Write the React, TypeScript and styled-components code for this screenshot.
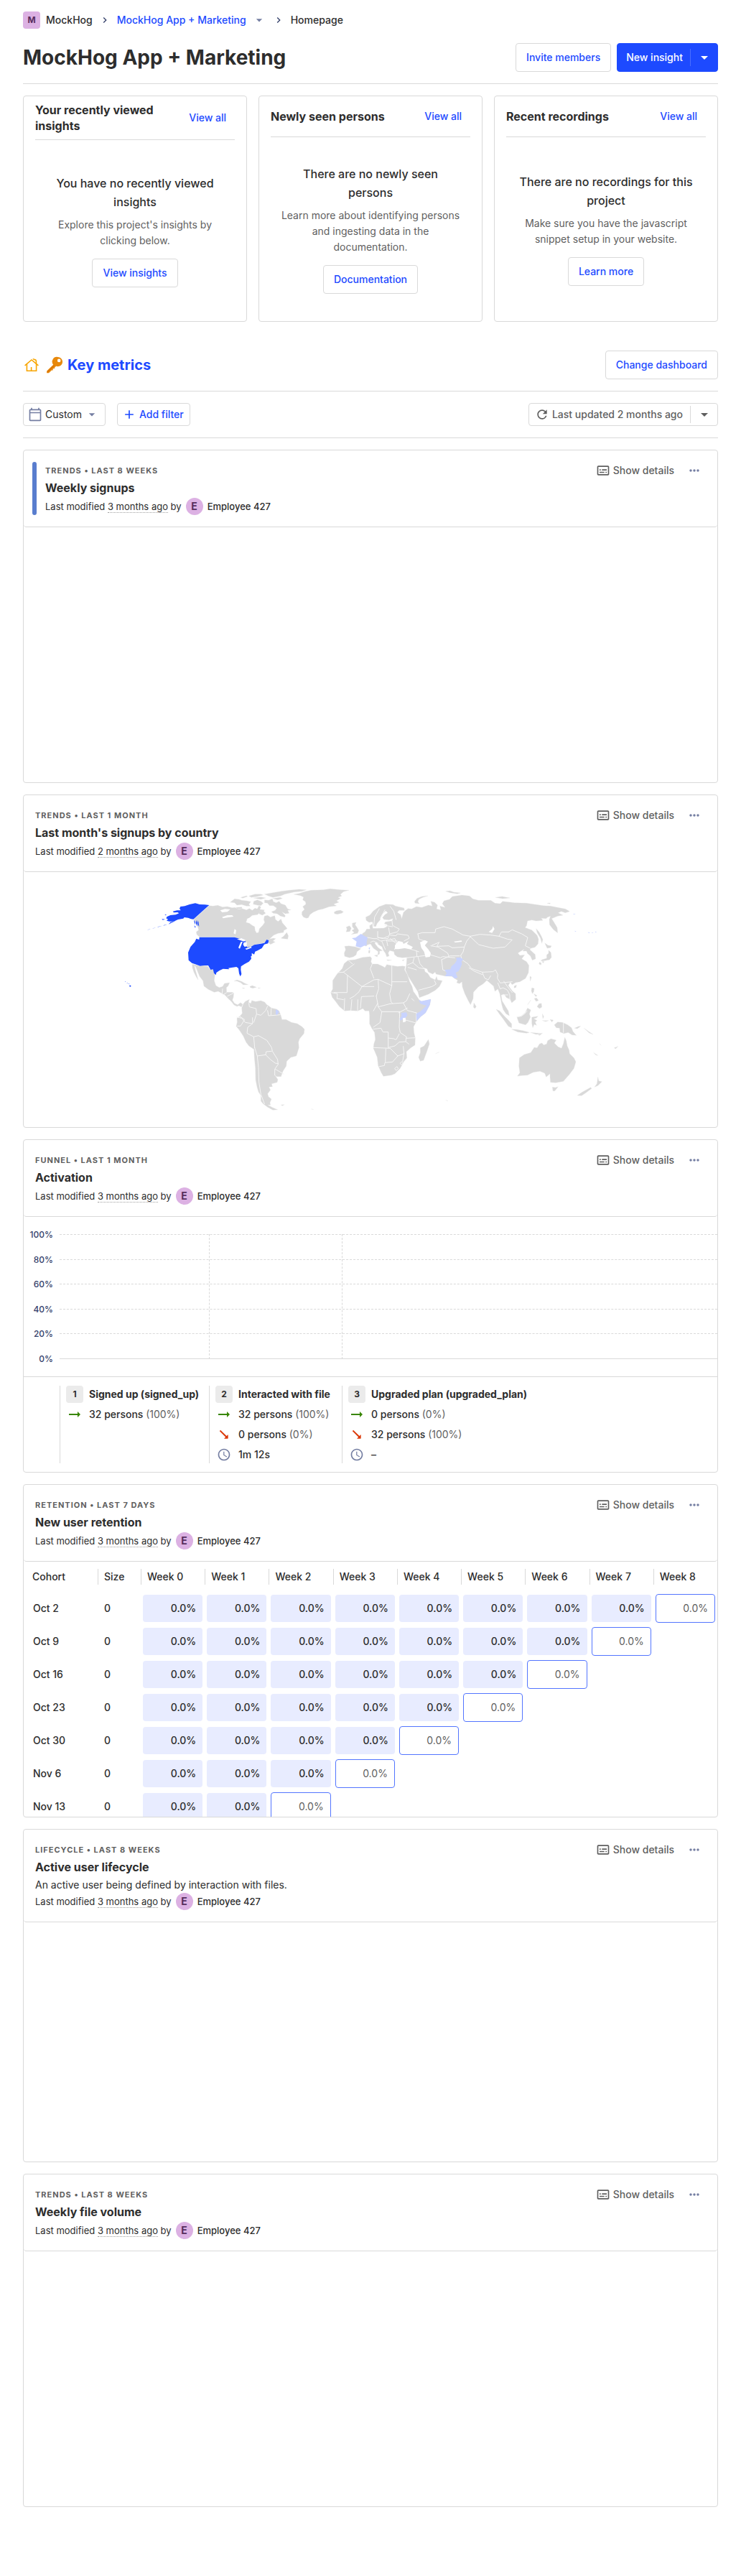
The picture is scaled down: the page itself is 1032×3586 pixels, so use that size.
import React from "react";
import styled, { createGlobalStyle, css } from "styled-components";
import {
  MdAdd,
  MdArrowDropDown,
  MdChevronRight,
  MdMoreHoriz,
  MdOutlineCalendarToday,
  MdOutlineSubtitles,
  MdRefresh,
  MdSchedule,
} from "react-icons/md";

const color = {
  text: "#2d2d2d",
  muted: "#5f5f5f",
  border: "#d9d9d9",
  primary: "#1d4aff",
  icon: "#747ea2",
  axis: "#35416b",
  lilac: "#dcb1e3",
  plum: "#572e5e",
};

const GlobalStyle = createGlobalStyle`
  *, *::before, *::after { box-sizing: border-box; }
  body {
    margin: 0;
    background: #fff;
    color: ${color.text};
    font-family: Inter, "Liberation Sans", sans-serif;
    font-size: 14px;
    line-height: 22px;
  }
  h1, h2, h3, h4, p { margin: 0; }
  a { color: ${color.primary}; text-decoration: none; }
  svg { flex-shrink: 0; }
`;

const Page = styled.main`
  padding: 16px 32px 96px;
`;

/* ---------- Breadcrumbs and page header ---------- */

const Breadcrumbs = styled.nav`
  display: flex;
  align-items: center;
  height: 24px;
  font-weight: 500;
  svg { color: ${color.axis}; }
`;

const CrumbGap = styled.span`
  display: flex;
  justify-content: center;
  width: 34px;
`;

const CrumbCaret = styled.button`
  display: flex;
  margin-left: 8px;
  padding: 0;
  border: 0;
  background: none;
  svg { color: ${color.icon}; }
`;

const Lettermark = styled.span<{ $round?: boolean }>`
  display: inline-flex;
  align-items: center;
  justify-content: center;
  flex-shrink: 0;
  width: 24px;
  height: 24px;
  border-radius: ${(p) => (p.$round ? "50%" : "4px")};
  background: ${color.lilac};
  color: ${color.plum};
  font-size: ${(p) => (p.$round ? "14px" : "12px")};
  font-weight: 700;
`;

const OrgName = styled.span`
  margin-left: 8px;
`;

const TitleBar = styled.header`
  display: flex;
  align-items: center;
  justify-content: space-between;
  gap: 16px;
  padding-bottom: 16px;
  border-bottom: 1px solid ${color.border};
`;

const PageTitleBar = styled(TitleBar)`
  margin: 20px 0 16px;
`;

const PageTitle = styled.h1`
  font-size: 28px;
  line-height: 36px;
  font-weight: 700;
`;

const ButtonRow = styled.div`
  display: flex;
  gap: 8px;
`;

const buttonBase = css`
  display: inline-flex;
  align-items: center;
  justify-content: center;
  border-radius: 4px;
  background: #fff;
  font: inherit;
  font-weight: 500;
  white-space: nowrap;
  cursor: pointer;
`;

const Button = styled.button`
  ${buttonBase}
  height: 40px;
  padding: 0 14px;
  border: 1px solid ${color.border};
  color: ${color.primary};
`;

const SmallButton = styled.button<{ $neutral?: boolean }>`
  ${buttonBase}
  gap: 4px;
  height: 32px;
  padding: 0 8px 0 6px;
  border: 1px solid ${color.border};
  color: ${(p) => (p.$neutral ? color.text : color.primary)};
  font-weight: ${(p) => (p.$neutral ? 400 : 500)};
  svg { color: ${(p) => (p.$neutral ? color.icon : color.primary)}; }
`;

const ButtonLink = styled.a`
  ${buttonBase}
  height: 40px;
  padding: 0 14px;
  border: 1px solid ${color.border};
`;

const PlainLink = styled.a`
  ${buttonBase}
  height: 40px;
  padding: 0 12px;
`;

const SplitButton = styled.div<{ $filled?: boolean }>`
  display: flex;
  align-items: center;
  height: ${(p) => (p.$filled ? "40px" : "32px")};
  border: 1px solid ${(p) => (p.$filled ? color.primary : color.border)};
  border-radius: 4px;
  background: ${(p) => (p.$filled ? color.primary : "#fff")};
  color: ${(p) => (p.$filled ? "#fff" : color.muted)};
`;

const SplitMain = styled.button`
  ${buttonBase}
  gap: 4px;
  height: 100%;
  padding: 0 10px 0 8px;
  border: 0;
  background: none;
  color: inherit;
`;

const FilledMain = styled(SplitMain)`
  padding: 0 10px 0 12px;
`;

const SplitMenu = styled.button<{ $filled?: boolean }>`
  ${buttonBase}
  height: 24px;
  width: 38px;
  padding: 0;
  border: 0;
  border-left: 1px solid ${(p) => (p.$filled ? "#4a6eff" : color.border)};
  border-radius: 0;
  background: none;
  color: inherit;
`;

/* ---------- Summary cards ---------- */

const SummaryGrid = styled.section`
  display: grid;
  grid-template-columns: repeat(3, minmax(0, 1fr));
  gap: 16px;
  margin-bottom: 40px;
`;

const SummaryCard = styled.article`
  display: flex;
  flex-direction: column;
  min-height: 315px;
  padding: 8px 16px 0;
  border: 1px solid ${color.border};
  border-radius: 4px;
`;

const SummaryHead = styled.header`
  display: flex;
  align-items: center;
  justify-content: space-between;
  padding-bottom: 8px;
  border-bottom: 1px solid ${color.border};
`;

const SummaryTitle = styled.h3`
  font-size: 16px;
  line-height: 22px;
  font-weight: 700;
`;

const EmptyState = styled.div`
  display: flex;
  flex: 1;
  flex-direction: column;
  align-items: center;
  justify-content: center;
  padding: 0 8px;
  text-align: center;
`;

const EmptyTitle = styled.h4`
  margin-bottom: 8px;
  padding: 0 8px;
  font-size: 16px;
  line-height: 26px;
  font-weight: 500;
`;

const EmptyText = styled.p`
  margin-bottom: 14px;
  color: ${color.muted};
`;

/* ---------- Dashboard bar ---------- */

const DashboardTitle = styled.h2`
  display: flex;
  align-items: center;
  gap: 10px;
  padding-left: 2px;
  font-size: 20px;
  line-height: 28px;
  font-weight: 700;
`;

const DashboardLink = styled.a`
  display: flex;
  align-items: center;
  gap: 6px;
`;

const FilterBar = styled.div`
  display: flex;
  align-items: center;
  justify-content: space-between;
  padding: 16px 0;
  margin-bottom: 16px;
  border-bottom: 1px solid ${color.border};
`;

const Filters = styled.div`
  display: flex;
  gap: 16px;
`;

/* ---------- Insight cards ---------- */

const InsightList = styled.section`
  display: grid;
  grid-auto-rows: 464px;
  gap: 16px;
`;

const Insight = styled.article`
  display: flex;
  flex-direction: column;
  overflow: hidden;
  border: 1px solid ${color.border};
  border-radius: 4px;
`;

const InsightHead = styled.header<{ $ribbon?: boolean }>`
  display: flex;
  gap: 12px;
  padding: 16px 16px 16px ${(p) => (p.$ribbon ? "12px" : "16px")};
  border-bottom: 1px solid ${color.border};
  border-radius: 0 0 4px 4px;
`;

const Ribbon = styled.span`
  width: 6px;
  border-radius: 3px;
  background: #597dce;
`;

const InsightInfo = styled.div`
  flex: 1;
  min-width: 0;
`;

const InsightTop = styled.div`
  display: flex;
  align-items: center;
  justify-content: space-between;
  height: 24px;
`;

const Kind = styled.span`
  color: ${color.muted};
  font-size: 11px;
  font-weight: 700;
  letter-spacing: 1px;
  text-transform: uppercase;
`;

const InsightActions = styled.div`
  display: flex;
  gap: 4px;
`;

const GhostButton = styled.button<{ $icon?: boolean }>`
  ${buttonBase}
  gap: 4px;
  height: 32px;
  min-width: 32px;
  padding: 0 ${(p) => (p.$icon ? "0" : "8px")};
  border: 0;
  color: ${(p) => (p.$icon ? color.icon : color.muted)};
`;

const InsightTitle = styled.h3`
  margin-bottom: 2px;
  font-size: 16px;
  line-height: 24px;
  font-weight: 700;
`;

const Meta = styled.div`
  display: flex;
  align-items: center;
  gap: 6px;
  height: 24px;
  font-size: 13px;
  line-height: 16px;
`;

const Ago = styled.time`
  border-bottom: 1px dotted #a0a0a0;
`;

const Author = styled.span`
  font-weight: 500;
`;

const InsightBody = styled.div`
  flex: 1;
  min-height: 0;
`;

/* ---------- Map ---------- */

const MapSvg = styled.svg`
  display: block;
  width: 100%;
  height: 100%;
`;

/* ---------- Funnel ---------- */

const Funnel = styled(InsightBody)`
  display: grid;
  grid-template-columns: 50px 208px 185px 1fr;
  grid-template-rows: 1fr auto;
`;

const Axis = styled.div`
  display: flex;
  grid-area: 1 / 1;
  flex-direction: column;
  justify-content: space-between;
  padding: 18px 9px 18px 0;
  color: ${color.axis};
  font-size: 12px;
  line-height: 13px;
  font-weight: 500;
  text-align: right;
`;

const GridLines = styled.div`
  display: flex;
  grid-area: 1 / 2 / 2 / -1;
  flex-direction: column;
  justify-content: space-between;
  padding: 24px 0;
`;

const GridLine = styled.span<{ $solid?: boolean }>`
  border-top: 1px ${(p) => (p.$solid ? "solid" : "dashed")} ${color.border};
`;

const StepDivider = styled.div<{ $column: number }>`
  grid-area: 1 / ${(p) => p.$column};
  margin: 24px 0;
  border-left: 1px dashed ${color.border};
`;

const StepCell = styled.div`
  padding: 12px 0;
  border-top: 1px solid ${color.border};
`;

const Step = styled.div`
  display: grid;
  grid-auto-rows: 24px;
  gap: 4px;
  height: 108px;
  padding: 0 8px;
  border-left: 1px solid ${color.border};
  white-space: nowrap;
`;

const StepRow = styled.div<{ $tone?: string }>`
  display: flex;
  align-items: center;
  gap: 8px;
  font-weight: 500;
  small {
    color: ${color.muted};
    font-size: 14px;
    font-weight: 400;
  }
  svg { color: ${(p) => p.$tone}; }
`;

const StepName = styled.strong`
  font-weight: 700;
`;

const StepIcon = styled.span<{ $turn?: boolean }>`
  display: flex;
  justify-content: center;
  width: 24px;
  svg { transform: ${(p) => (p.$turn ? "rotate(45deg)" : "none")}; }
`;

const Glyph = styled.span`
  width: 24px;
  height: 24px;
  border-radius: 4px;
  background: #ebebeb;
  font-size: 12px;
  line-height: 24px;
  font-weight: 700;
  text-align: center;
`;

/* ---------- Retention ---------- */

const RetentionTable = styled.table`
  width: 100%;
  table-layout: fixed;
  border-collapse: collapse;
`;

const HeadCell = styled.th<{ $width?: string }>`
  width: ${(p) => p.$width};
  height: 42px;
  padding: 0;
  font-weight: 500;
  text-align: left;
  span {
    display: block;
    padding-left: 8px;
    border-left: 1px solid ${color.border};
  }
  &:first-child span {
    padding-left: 12px;
    border-left: 0;
  }
`;

const LabelCell = styled.td<{ $first?: boolean }>`
  height: 46px;
  padding: 0 0 0 ${(p) => (p.$first ? "13px" : "9px")};
  font-weight: 500;
`;

const ValueCell = styled.td`
  padding: 0 3px;
`;

const Value = styled.div<{ $open?: boolean }>`
  height: ${(p) => (p.$open ? "40px" : "38px")};
  padding-right: 9px;
  border: ${(p) => (p.$open ? "1px solid #5375ff" : "0")};
  border-radius: 4px;
  background: ${(p) => (p.$open ? "#fff" : "#e8ecff")};
  color: ${(p) => (p.$open ? color.muted : color.text)};
  font-weight: ${(p) => (p.$open ? 400 : 500)};
  line-height: 38px;
  text-align: right;
`;

/* ---------- Data ---------- */

const summaries = [
  {
    title: "Your recently viewed insights",
    heading: "You have no recently viewed insights",
    text: "Explore this project's insights by clicking below.",
    action: "View insights",
  },
  {
    title: "Newly seen persons",
    heading: "There are no newly seen persons",
    text: "Learn more about identifying persons and ingesting data in the documentation.",
    action: "Documentation",
  },
  {
    title: "Recent recordings",
    heading: "There are no recordings for this project",
    text: "Make sure you have the javascript snippet setup in your website.",
    action: "Learn more",
  },
];

const cohorts = ["Oct 2", "Oct 9", "Oct 16", "Oct 23", "Oct 30", "Nov 6", "Nov 13"];
const weeks = [0, 1, 2, 3, 4, 5, 6, 7, 8];

const americas = [
  // Canada
  "M424,152L440,154 460,151 480,158 500,156 520,161 532,160 545,167 562,165 580,170 592,164 604,172 615,163 625,166 632,152 640,158 636,168 655,170 648,180 636,180 626,190 604,193 592,203 582,210 578,222 592,226 604,235 614,240 616,256 622,266 630,264 634,248 648,234 656,222 652,210 655,196 668,193 680,200 692,196 698,194 701,210 712,218 724,208 730,224 742,238 750,248 736,256 735,264 712,268 694,275 684,284 676,292 692,288 702,290 690,300 700,304 680,314 672,306 673,296 664,294 655,308 640,310 612,316 600,322 590,330 578,326 582,308 570,296 548,290 530,283 383,283 372,272 370,262 380,254 376,240 368,226 360,209Z",
  "M735,280L748,264 755,278 752,292 735,290 724,288Z",
  "M536,160L560,158 562,164 540,166Z",
  "M512,138L530,124 548,126 560,130 580,132 598,136 590,146 595,154 580,154 560,148 540,150 530,140Z",
  "M610,134L625,128 640,134 650,142 640,152 625,150 608,146Z M655,128L672,130 688,124 692,136 704,140 716,134 724,144 742,150 752,166 766,170 752,172 758,184 742,186 728,178 742,194 740,200 722,196 708,186 692,184 684,178 700,172 706,162 692,152 676,152 668,142 655,140Z",
  "M634,176L650,174 660,184 646,192 632,186Z",
  "M590,112L615,104 640,104 650,108 625,114 600,118Z M556,118L580,111 584,114 564,121Z M655,104L690,98 725,92 760,88 800,84 830,86 812,92 780,95 740,104 722,112 690,118 672,112Z M610,120L640,116 660,120 640,126Z M690,122L720,118 730,122 710,128Z",
  // Greenland
  "M778,105L800,101 822,94 850,88 900,86 930,82 975,86 1008,88 985,94 972,106 978,112 962,118 972,122 956,132 966,138 944,146 956,153 925,157 900,166 880,170 858,180 845,190 838,203 830,205 818,200 811,190 812,178 822,168 815,156 828,146 826,136 815,128 818,116 805,110Z",
  "M946,179L955,174 972,171 985,178 978,184 960,188 948,186Z",
  // Mexico and Central America
  "M353,397L366,399 386,405 400,402 418,405 426,418 440,418 448,440 445,465 452,486 466,494 480,490 488,477 509,474 503,488 496,494 497,514 520,514 527,517 525,535 521,547 530,560 543,566 555,557 564,564 559,575 548,570 540,573 528,567 516,552 503,540 490,526 474,517 462,510 445,514 420,502 402,488 398,466 384,448 376,428 368,408 362,402 366,420 372,440 378,462 370,450 360,430 354,412Z",
  "M528,467L540,462 560,469 572,476 587,482 566,483 556,474 540,467Z M594,490L604,486 622,493 606,497 596,494Z M562,495L573,497 566,499Z M628,495L638,496 630,498Z",
  // South America
  "M560,580L567,562 575,552 592,544 588,556 598,560 602,548 618,553 640,549 656,555 665,566 672,570 684,580 705,584 716,592 724,612 728,628 745,628 768,640 792,645 812,658 822,668 820,686 802,708 797,722 799,745 793,765 788,780 765,786 748,802 746,822 733,842 724,866 706,866 697,858 711,878 708,890 685,896 688,908 674,910 680,922 668,938 672,950 684,960 678,975 680,985 668,984 690,996 710,1004 690,1006 668,994 650,980 640,968 640,945 630,930 624,910 618,880 617,830 613,790 611,752 590,738 578,722 566,696 550,672 537,656 541,638 540,622 552,614 562,602Z",
  "M724,984L738,983 730,988Z M850,1001L860,1004Z",
  // British Isles
  "M1022,225L1038,222 1034,232 1042,244 1049,256 1044,268 1018,272 1030,264 1020,256 1030,250 1022,240Z M996,262L1000,250 996,242 1010,236 1018,246 1012,260Z",
  // Iberia
  "M990,322L1008,320 1034,324 1058,332 1042,344 1038,358 1026,366 1010,370 990,364 988,350 994,336Z",
];

const africa =
  "M1005,380L1032,378 1065,368 1097,365 1103,372 1100,386 1105,396 1128,396 1150,406 1158,411 1166,398 1184,402 1210,406 1232,404 1243,406 1240,420 1252,440 1262,470 1272,490 1277,510 1290,528 1302,546 1312,552 1350,543 1346,566 1328,600 1305,618 1288,640 1278,658 1280,684 1285,704 1284,734 1266,746 1248,762 1250,788 1237,804 1222,832 1200,854 1185,860 1152,865 1143,850 1130,820 1126,785 1110,748 1112,730 1118,712 1115,682 1103,664 1094,646 1094,610 1092,592 1075,592 1066,582 1045,592 1012,590 990,592 968,574 952,552 938,535 932,515 940,500 940,465 958,438 980,415 988,394Z";

const eurasia = [
  // Europe, Russia and Asia as one landmass
  "M15,268L25,262 32,250 46,250 44,236 55,228 58,247 80,247 104,246 116,240 118,232 106,228 110,220 138,216 142,206 125,212 104,210 98,202 108,190 120,182 112,174 98,186 90,200 88,212 76,226 70,240 60,238 56,220 42,222 30,214 28,200 45,192 60,174 85,156 112,146 142,148 152,154 188,162 190,172 168,172 160,180 174,190 178,206 186,180 195,172 205,164 220,166 240,156 262,160 290,150 306,154 300,134 316,138 328,150 324,166 342,170 338,154 360,160 348,144 355,132 378,126 390,114 430,108 462,112 475,124 498,130 550,130 568,142 590,144 600,134 650,140 700,142 740,148 770,152 800,154 830,160 862,166 880,176 862,182 845,176 832,182 852,192 830,196 805,206 815,222 828,244 830,266 812,252 796,232 795,210 800,196 788,200 782,206 762,205 768,214 740,216 722,212 704,216 700,236 694,244 722,254 744,276 750,292 748,312 735,326 718,330 714,336 736,356 738,374 724,380 716,362 704,352 700,342 684,342 690,334 664,350 672,360 692,358 680,374 700,386 710,402 708,432 696,456 672,470 655,473 640,482 632,472 624,486 640,508 654,520 655,544 638,558 632,544 616,536 606,522 594,526 598,550 614,576 624,592 628,612 614,604 602,586 596,564 588,520 580,500 568,510 562,488 548,476 534,464 520,478 498,492 478,514 477,540 466,566 456,548 442,520 432,492 430,470 420,478 408,474 412,464 400,457 388,448 358,446 322,438 318,430 308,438 290,430 284,416 272,412 276,428 288,436 298,452 318,462 324,448 328,462 348,466 336,490 318,506 290,522 252,536 246,512 226,480 206,448 194,420 198,400 200,368 180,370 160,366 148,356 146,344 128,340 122,350 126,362 116,366 110,350 102,340 96,324 80,314 72,304 66,310 80,328 98,340 86,342 86,354 78,358 80,344 60,330 48,312 35,316 30,322 10,310 10,280Z",
  "M64,360L78,358 76,366Z M40,340L46,338 45,350 40,350Z M116,378L136,380 120,382Z M180,380L190,377 184,383Z",
  // Novaya Zemlya and Arctic islands
  "M234,142L232,134 242,122 262,114 288,111 266,118 250,126 246,136 252,144Z M362,92L380,90 396,96 424,99 410,103 380,98Z M570,118L598,114 630,120 600,123Z M786,142L800,141 796,145Z",
  // Sakhalin, Japan, Taiwan, Hainan
  "M740,248L752,262 762,280 768,294 764,310 758,288 744,264Z M776,308L790,318 804,320 800,328 786,330Z M792,338L802,348 804,368 796,378 778,382 760,384 764,378 784,372 784,358 792,352Z M754,388L762,392 760,400 752,396Z M766,384L774,386 768,392Z M714,448L720,450 716,468Z M648,488L658,484 656,494 648,496Z",
  "M480,558L490,574 484,582 478,576Z",
  // Madagascar
  "M290,711L294,730 284,760 270,798 256,802 249,786 256,766 256,746 272,738Z",
  // Philippines
  "M722,495L732,498 730,512 724,520 720,508Z M732,540L742,538 750,548 740,552Z M752,562L762,560 764,576 754,582 744,574Z M730,520L744,528 738,532Z M704,566L718,546 708,562Z",
  // Indonesia and Papua
  "M573,585L588,592 606,612 626,632 638,646 638,662 624,656 604,628 586,604Z M638,668L660,670 684,674 712,682 700,685 664,680Z M660,618L676,614 694,600 704,580 718,588 712,604 716,618 706,640 696,650 668,642Z M722,618L748,614 740,622 730,624 744,632 736,638 742,652 732,648 726,662 722,644Z M716,682L740,684 766,686 740,690Z M748,692L766,684 756,694Z M766,604L772,616 768,624Z M766,632L792,632 780,636Z M798,628L812,630 806,638Z M816,650L830,638 850,640 872,650 888,662 894,678 908,694 890,692 874,682 856,686 840,680 838,664 824,662Z M900,664L918,656 926,656 912,666Z",
  "M940,664L960,678 978,690 962,684Z M980,766L998,778 990,776Z M1066,746L1082,740 1072,750Z M1004,728L1012,736Z M362,964L372,968Z M320,770L336,764Z",
  // Australia and New Zealand
  "M662,864L672,850 668,822 670,788 690,774 718,766 732,744 744,746 754,730 764,726 772,734 784,730 788,716 802,708 824,714 816,726 832,742 846,748 854,728 860,702 866,716 870,738 878,756 880,770 898,788 906,804 898,832 880,856 854,886 822,892 800,890 798,868 798,854 782,868 776,852 756,844 728,848 704,860 680,862Z",
  "M808,910L820,912 832,908 818,926 810,926Z M998,868L1002,884 1015,887 998,904 984,910 994,896Z M968,911L972,916 948,934 930,946 912,945 930,932Z",
];

const borders = [
  "M1105,396L1097,416 1112,455M1187,402L1187,470 1250,470M1187,470L1187,486 1130,460 1112,462 1062,490 985,430M985,430L1030,396M985,430L960,432M1002,444L1000,515 945,515M1062,490L1050,512 1030,530 1012,540M1130,460L1132,500 1122,530M1062,490L1112,490M1187,486L1178,520 1184,555 1190,560M1112,530L1060,532 1056,580M1045,545L1044,590M1020,545L1016,590M990,540L988,588M958,540L985,545M935,515L960,520 958,540M1122,530L1128,560 1110,592M1128,560L1130,575 1180,562M1180,562L1235,558 1248,550 1262,520M1235,558L1252,590 1290,600M1130,575L1145,595 1220,595M1145,595L1138,640 1110,660M1110,668L1142,664 1150,680 1172,680 1172,745M1110,745L1180,748M1172,705L1195,708 1205,712 1218,688M1220,595L1218,660 1222,682 1248,700M1248,700L1245,720 1258,730M1248,706L1285,704M1290,632L1288,642 1245,630M1290,632L1290,600M1172,745L1200,738 1218,722 1245,720M1235,740L1238,770 1212,780 1180,748M1212,780L1190,805 1158,808 1156,820 1135,824M1162,750L1160,805M1238,770L1232,804M1200,832L1208,824 1214,832 1206,840ZM1222,810l6,-6 6,6 -6,6ZM1215,600L1252,580M1270,540L1280,550M1005,380L1022,395",
  "M1170,300L1210,300M1128,260L1128,285 1150,290 1170,280M1174,245L1178,270 1210,262 1218,250 1190,235 1188,216M1178,270L1170,290 1128,285M1178,275L1205,278 1210,270 1255,276 1260,288 1238,300M1085,285L1110,290 1125,290 1140,300 1165,296 1170,320M1098,305L1110,300 1130,310M1165,296L1200,290 1210,312 1198,335M1145,300L1160,335M1180,290L1205,310M1158,170L1140,205M1135,165L1115,200 1112,235M1180,155L1195,175 1205,210M1158,235L1190,240",
  "M1250,330L1280,338 1300,345M1290,340L1292,365 1250,370M1292,365L1330,360 1350,358 1390,370 1400,365 1450,370M1296,365L1305,395 1322,415M1280,370L1275,390 1252,400M1275,390L1300,412 1322,416M1255,410L1290,420M1300,505L1355,490 1372,480 1365,465M1395,378L1400,420 1412,425M1395,378L1430,362 1470,362M1350,320L1380,325 1420,350 1425,362M1355,318L1385,305 1375,322 1425,320 1440,328 1490,325 1500,300 1515,282M1296,270L1315,265 1368,265 1370,250 1405,240 1440,250 1485,275 1515,280M1296,270L1300,292 1325,300M1515,280L1555,272 1600,275 1635,280 1645,262 1675,262M1515,282L1550,315 1610,330 1660,325 1690,295 1670,292 1635,280M1675,262L1690,253 1730,270 1755,285 1745,320 1765,330M1490,325L1485,345 1475,360 1480,378 1505,395 1520,415 1565,430 1610,428 1620,420 1630,440 1628,455 1640,475 1690,470M1510,412L1530,425 1565,440M1565,430L1575,455 1590,462 1600,445M1630,475L1640,500 1652,495 1670,505 1680,525 1680,548M1655,468L1670,490 1690,515M1650,525L1672,525M1710,616L1728,614 1742,604 1752,592M1904,640L1904,682",
  "M590,560L592,575 620,582 622,605 610,640M540,618L560,622 575,640 605,645 605,620M552,615L572,628 555,655 542,655M605,645L585,660 582,685 610,700 630,695 665,715 685,745 688,760 710,795 712,815M610,700L614,745M614,745L625,780 660,775 662,762 685,760M660,775L680,795 700,810 712,812M625,780L630,830 632,890 640,940 655,980M700,835L735,855M712,815L698,835 698,860M622,605L640,610 660,590 668,572M668,590L672,612 720,608M683,582L682,608M480,500L478,520M496,516L482,525M525,518L500,530",
];

const waters = [
  "M470,172L490,166 512,168 500,178 478,180ZM478,200L500,192 520,192 526,198 500,202 482,205ZM530,250L537,255 534,272 526,268ZM580,208L600,200 612,204 596,214Z",
  "M540,292L560,288 576,296 570,302 556,298ZM556,304L564,302 552,332 546,328ZM568,306L580,304 582,322 572,324 566,316ZM574,332L598,324 602,328 580,336Z",
  "M1200,318L1214,300 1232,304 1236,312 1258,300 1250,312 1275,325 1268,334 1240,330 1215,334 1200,334ZM1305,305L1325,296 1338,302 1325,318 1340,335 1350,350 1346,366 1328,368 1322,345 1310,328ZM1446,302L1478,298 1480,303 1452,306ZM1592,262L1606,250 1610,238 1616,250 1606,266ZM1233,622L1244,620 1246,636 1234,640Z",
];

function WorldMap() {
  return (
    <MapSvg viewBox="-351 12 2898 1065" role="img" aria-label="World map of signups by country">
      <g fill="#d9d9d9" stroke="#e6e6e6" strokeWidth="1">
        {americas.map((d) => <path key={d} d={d} />)}
        <path d={africa} />
        <g transform="translate(1050)">{eurasia.map((d) => <path key={d} d={d} />)}</g>
      </g>
      <g fill="none" stroke="#f6f6f6" strokeWidth="3" strokeLinejoin="round" strokeLinecap="round">
        {borders.map((d) => <path key={d} d={d} />)}
      </g>
      <g fill="#1d4aff">
        <path d="M424,150L358,209 348,208 336,203 320,201 316,206 294,210 276,218 258,218 246,215 252,209 244,205 248,198 262,192 284,190 298,184 292,180 276,181 272,176 290,172 305,172 300,164 304,156 322,154 342,147 366,142 384,147 406,148Z" />
        <path d="M283,216L264,225 254,230 262,221ZM250,230L232,236 236,233ZM228,236L206,243 212,240ZM202,243L186,249 192,246ZM180,250L164,254 172,251ZM238,190L246,189 242,193ZM226,208L240,209 230,212Z" />
        <path d="M362,212l4,10 -1,10 -4,-14ZM370,212l5,12 -2,14 -4,-12ZM376,212l4,10 2,18 -5,-8ZM362,234l6,8 -4,2Z" />
        <path d="M383,284L530,284 552,290 564,290 578,304 582,326 598,324 612,316 640,311 655,308 664,294 673,297 670,310 654,314 644,330 626,340 616,344 612,356 602,350 602,362 598,364 600,374 590,386 572,396 557,406 556,420 559,438 554,448 549,436 546,414 538,408 518,411 504,413 508,418 482,416 466,424 454,432 452,442 444,434 440,418 430,420 420,402 402,402 386,404 366,397 352,392 338,380 336,348 346,324 364,304 370,290 382,294Z" />
        <path d="M91,484l6,2 0,4 -5,2ZM80,474l4,2 -3,1ZM72,468l3,1 -2,2ZM87,477l4,1 -3,2Z" />
      </g>
      <g fill="#c8d3ff">
        <path d="M1020,288L1036,286 1046,278 1058,270 1072,278 1086,286 1082,302 1082,318 1070,320 1056,328 1036,322 1040,302ZM1091,328L1096,326 1095,335 1091,334ZM702,586L712,590 716,597 708,608 702,606Z" />
        <g transform="translate(1050)">
          <path d="M358,420L382,418 386,406 400,394 408,382 406,370 424,368 436,378 428,384 430,396 424,412 416,426 404,432 412,452 400,457 388,446 360,447 366,434Z" />
          <path d="M250,546L260,551 300,543 296,566 278,600 258,616 241,634 239,604 256,594 282,570 256,562ZM176,600L198,598 202,610 194,622 172,632 170,624 178,612Z" />
          <path d="M894,186L906,187 898,189ZM952,229L960,230ZM900,257L908,259 904,261ZM956,263L966,264 960,267ZM972,264L980,265 974,267ZM986,260L994,262 988,264Z" />
        </g>
      </g>
      <g fill="#fff">{waters.map((d) => <path key={d} d={d} />)}</g>
    </MapSvg>
  );
}

/* ---------- Icons ---------- */

function HomeIcon() {
  return (
    <svg width="20" height="20" viewBox="0 0 20 20" fill="none" stroke="#f7a501" strokeWidth="1.6" aria-hidden="true">
      <path d="M.6 10.8 10 3l9.4 7.8" />
      <path d="M3.4 9v9.2h13.2V9" />
      <path d="M9.6 18v-5" />
      <path d="M16.4 8.4V4.2M12.2 1.2c.4 1.4 1.6 1.2 2.4 1.4s1.8.4 1.8 1.8" />
    </svg>
  );
}

function KeyIcon() {
  return (
    <svg width="24" height="24" viewBox="0 0 24 24" aria-hidden="true">
      <path
        fill="#e8890c"
        fillRule="evenodd"
        d="M16.5 1a6.6 6.6 0 0 1 6.6 6.6 6.6 6.6 0 0 1-9 6.1l-1.9 1.8.1 1.6-1.8-.1-.9.9.2 1.7-1.9-.1-3.9 3.7-3 .1.3-3 8.9-8.6A6.6 6.6 0 0 1 16.5 1Zm1.7 2.6a2.3 2.3 0 1 0 0 4.6 2.3 2.3 0 0 0 0-4.6Z"
      />
      <path stroke="#c7600a" strokeWidth="1" d="m2 22 9.6-9.4" />
    </svg>
  );
}

function ArrowIcon() {
  return (
    <svg width="16" height="8" viewBox="0 0 16 8" fill="currentColor" aria-hidden="true">
      <path d="M0 3h12V0l4 4-4 4V5H0z" />
    </svg>
  );
}

/* ---------- Views ---------- */

interface InsightCardProps {
  kind: string;
  title: string;
  ago?: string;
  description?: string;
  ribbon?: boolean;
  children?: React.ReactNode;
}

function InsightCard({ kind, title, ago = "3 months ago", description, ribbon, children }: InsightCardProps) {
  return (
    <Insight>
      <InsightHead $ribbon={ribbon}>
        {ribbon && <Ribbon />}
        <InsightInfo>
          <InsightTop>
            <Kind>{kind}</Kind>
            <InsightActions>
              <GhostButton type="button">
                <MdOutlineSubtitles size={20} />
                Show details
              </GhostButton>
              <GhostButton type="button" $icon aria-label="More">
                <MdMoreHoriz size={20} />
              </GhostButton>
            </InsightActions>
          </InsightTop>
          <InsightTitle>{title}</InsightTitle>
          {description && <p>{description}</p>}
          <Meta>
            <span>Last modified <Ago>{ago}</Ago> by</span>
            <Lettermark $round>E</Lettermark>
            <Author>Employee 427</Author>
          </Meta>
        </InsightInfo>
      </InsightHead>
      {children}
    </Insight>
  );
}

function Converted({ children }: { children: React.ReactNode }) {
  return (
    <StepRow $tone="#388600">
      <StepIcon><ArrowIcon /></StepIcon>
      <span>{children}</span>
    </StepRow>
  );
}

function Dropped({ children }: { children: React.ReactNode }) {
  return (
    <StepRow $tone="#db3707">
      <StepIcon $turn><ArrowIcon /></StepIcon>
      <span>{children}</span>
    </StepRow>
  );
}

function Elapsed({ children }: { children: React.ReactNode }) {
  return (
    <StepRow $tone={color.icon}>
      <StepIcon><MdSchedule size={20} /></StepIcon>
      <span>{children}</span>
    </StepRow>
  );
}

function FunnelChart() {
  return (
    <Funnel>
      <Axis>
        {["100%", "80%", "60%", "40%", "20%", "0%"].map((tick) => <span key={tick}>{tick}</span>)}
      </Axis>
      <GridLines>
        {[100, 80, 60, 40, 20, 0].map((tick) => <GridLine key={tick} $solid={tick === 0} />)}
      </GridLines>
      <StepDivider $column={3} />
      <StepDivider $column={4} />
      <StepCell />
      <StepCell>
        <Step>
          <StepRow><Glyph>1</Glyph><StepName>Signed up (signed_up)</StepName></StepRow>
          <Converted>32 persons <small>(100%)</small></Converted>
        </Step>
      </StepCell>
      <StepCell>
        <Step>
          <StepRow><Glyph>2</Glyph><StepName>Interacted with file</StepName></StepRow>
          <Converted>32 persons <small>(100%)</small></Converted>
          <Dropped>0 persons <small>(0%)</small></Dropped>
          <Elapsed>1m 12s</Elapsed>
        </Step>
      </StepCell>
      <StepCell>
        <Step>
          <StepRow><Glyph>3</Glyph><StepName>Upgraded plan (upgraded_plan)</StepName></StepRow>
          <Converted>0 persons <small>(0%)</small></Converted>
          <Dropped>32 persons <small>(100%)</small></Dropped>
          <Elapsed>–</Elapsed>
        </Step>
      </StepCell>
    </Funnel>
  );
}

function Retention() {
  return (
    <InsightBody>
      <RetentionTable>
        <thead>
          <tr>
            <HeadCell $width="103px"><span>Cohort</span></HeadCell>
            <HeadCell $width="60px"><span>Size</span></HeadCell>
            {weeks.map((week) => <HeadCell key={week}><span>Week {week}</span></HeadCell>)}
          </tr>
        </thead>
        <tbody>
          {cohorts.map((cohort, row) => (
            <tr key={cohort}>
              <LabelCell $first>{cohort}</LabelCell>
              <LabelCell>0</LabelCell>
              {weeks.map((week) => (
                <ValueCell key={week}>
                  {week <= 8 - row && <Value $open={week === 8 - row}>0.0%</Value>}
                </ValueCell>
              ))}
            </tr>
          ))}
        </tbody>
      </RetentionTable>
    </InsightBody>
  );
}

export default function App() {
  return (
    <>
      <GlobalStyle />
      <Page>
        <Breadcrumbs aria-label="Breadcrumb">
          <Lettermark>M</Lettermark>
          <OrgName>MockHog</OrgName>
          <CrumbGap><MdChevronRight size={16} /></CrumbGap>
          <a href="#project">MockHog App + Marketing</a>
          <CrumbCaret type="button" aria-label="Switch project"><MdArrowDropDown size={20} /></CrumbCaret>
          <CrumbGap><MdChevronRight size={16} /></CrumbGap>
          <span>Homepage</span>
        </Breadcrumbs>

        <PageTitleBar>
          <PageTitle>MockHog App + Marketing</PageTitle>
          <ButtonRow>
            <Button type="button">Invite members</Button>
            <SplitButton $filled>
              <FilledMain type="button">New insight</FilledMain>
              <SplitMenu type="button" $filled aria-label="More insight types">
                <MdArrowDropDown size={24} />
              </SplitMenu>
            </SplitButton>
          </ButtonRow>
        </PageTitleBar>

        <SummaryGrid>
          {summaries.map((item) => (
            <SummaryCard key={item.title}>
              <SummaryHead>
                <SummaryTitle>{item.title}</SummaryTitle>
                <PlainLink href="#all">View all</PlainLink>
              </SummaryHead>
              <EmptyState>
                <EmptyTitle>{item.heading}</EmptyTitle>
                <EmptyText>{item.text}</EmptyText>
                <ButtonLink href="#open">{item.action}</ButtonLink>
              </EmptyState>
            </SummaryCard>
          ))}
        </SummaryGrid>

        <TitleBar>
          <DashboardTitle>
            <HomeIcon />
            <DashboardLink href="#dashboard"><KeyIcon />Key metrics</DashboardLink>
          </DashboardTitle>
          <Button type="button">Change dashboard</Button>
        </TitleBar>

        <FilterBar>
          <Filters>
            <SmallButton type="button" $neutral>
              <MdOutlineCalendarToday size={20} />
              Custom
              <MdArrowDropDown size={20} />
            </SmallButton>
            <SmallButton type="button">
              <MdAdd size={20} />
              Add filter
            </SmallButton>
          </Filters>
          <SplitButton>
            <SplitMain type="button">
              <MdRefresh size={20} />
              Last updated 2 months ago
            </SplitMain>
            <SplitMenu type="button" aria-label="Refresh options">
              <MdArrowDropDown size={24} />
            </SplitMenu>
          </SplitButton>
        </FilterBar>

        <InsightList>
          <InsightCard kind="Trends • Last 8 weeks" title="Weekly signups" ribbon />
          <InsightCard kind="Trends • Last 1 month" title="Last month's signups by country" ago="2 months ago">
            <InsightBody><WorldMap /></InsightBody>
          </InsightCard>
          <InsightCard kind="Funnel • Last 1 month" title="Activation"><FunnelChart /></InsightCard>
          <InsightCard kind="Retention • Last 7 days" title="New user retention"><Retention /></InsightCard>
          <InsightCard
            kind="Lifecycle • Last 8 weeks"
            title="Active user lifecycle"
            description="An active user being defined by interaction with files."
          />
          <InsightCard kind="Trends • Last 8 weeks" title="Weekly file volume" />
        </InsightList>
      </Page>
    </>
  );
}
